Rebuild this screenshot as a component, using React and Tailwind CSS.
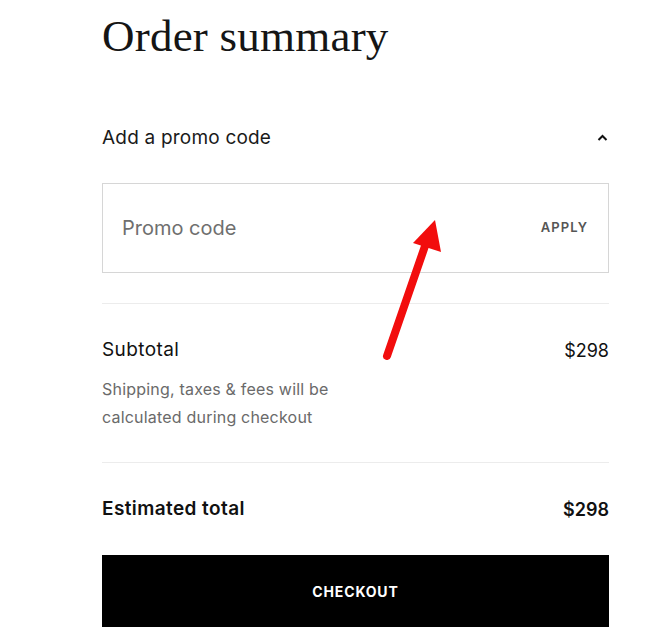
function Arrow() {
  return (
    <svg
      className="absolute left-0 top-0 pointer-events-none"
      width="669"
      height="644"
      viewBox="0 0 669 644"
    >
      <line x1="387" y1="356" x2="425" y2="246" stroke="#f20d0d" strokeWidth="8" strokeLinecap="round" />
      <polygon points="435,220 413,243 441,252" fill="#f20d0d" />
    </svg>
  );
}

function App() {
  return (
    <div className="relative min-h-screen w-[669px] bg-white font-['Inter','Liberation_Sans',sans-serif] text-[#111]">
      <div className="ml-[102px] w-[507px] pt-[14px]">
        <h1 className="font-['Liberation_Serif',serif] text-[45px] leading-[1] font-normal tracking-[0.005em] text-[#151515]">
          Order summary
        </h1>

        <div className="mt-[59px] flex h-[40px] items-center justify-between">
          <span className="text-[19px] tracking-[0.2px] text-[#1a1a1a]">Add a promo code</span>
          <svg width="11" height="8" viewBox="0 0 11 8" className="mr-[1px]">
            <path d="M1.5 6 L5.5 2 L9.5 6" fill="none" stroke="#111" strokeWidth="2" />
          </svg>
        </div>

        <div className="mt-[25px] flex h-[90px] items-center justify-between border border-[#d6d6d6] pl-[19px] pr-[20px]">
          <input
            placeholder="Promo code"
            className="w-[300px] bg-transparent text-[20px] text-[#222] outline-none placeholder:text-[#6f6f6f]"
          />
          <button className="text-[13px] font-semibold tracking-[0.08em] text-[#555]">
            APPLY
          </button>
        </div>

        <div className="mt-[30px] h-px bg-[#ececec]" />

        <div className="mt-[32px] flex h-[28px] items-center justify-between">
          <span className="text-[19px] tracking-[0.4px]">Subtotal</span>
          <span className="text-[18px]">$298</span>
        </div>
        <p className="mt-[11px] w-[265px] text-[16px] leading-[28px] tracking-[0.2px] text-[#6a6a6a]">
          Shipping, taxes &amp; fees will be calculated during checkout
        </p>

        <div className="mt-[31px] h-px bg-[#ececec]" />

        <div className="mt-[32px] flex h-[28px] items-center justify-between font-semibold">
          <span className="text-[19px] tracking-[0.4px]">Estimated total</span>
          <span className="text-[18px]">$298</span>
        </div>

        <button className="mt-[32px] flex h-[72px] w-full items-center justify-center bg-black text-[14px] font-bold tracking-[0.06em] text-white">
          CHECKOUT
        </button>
      </div>
      <Arrow />
    </div>
  );
}

export default App;
